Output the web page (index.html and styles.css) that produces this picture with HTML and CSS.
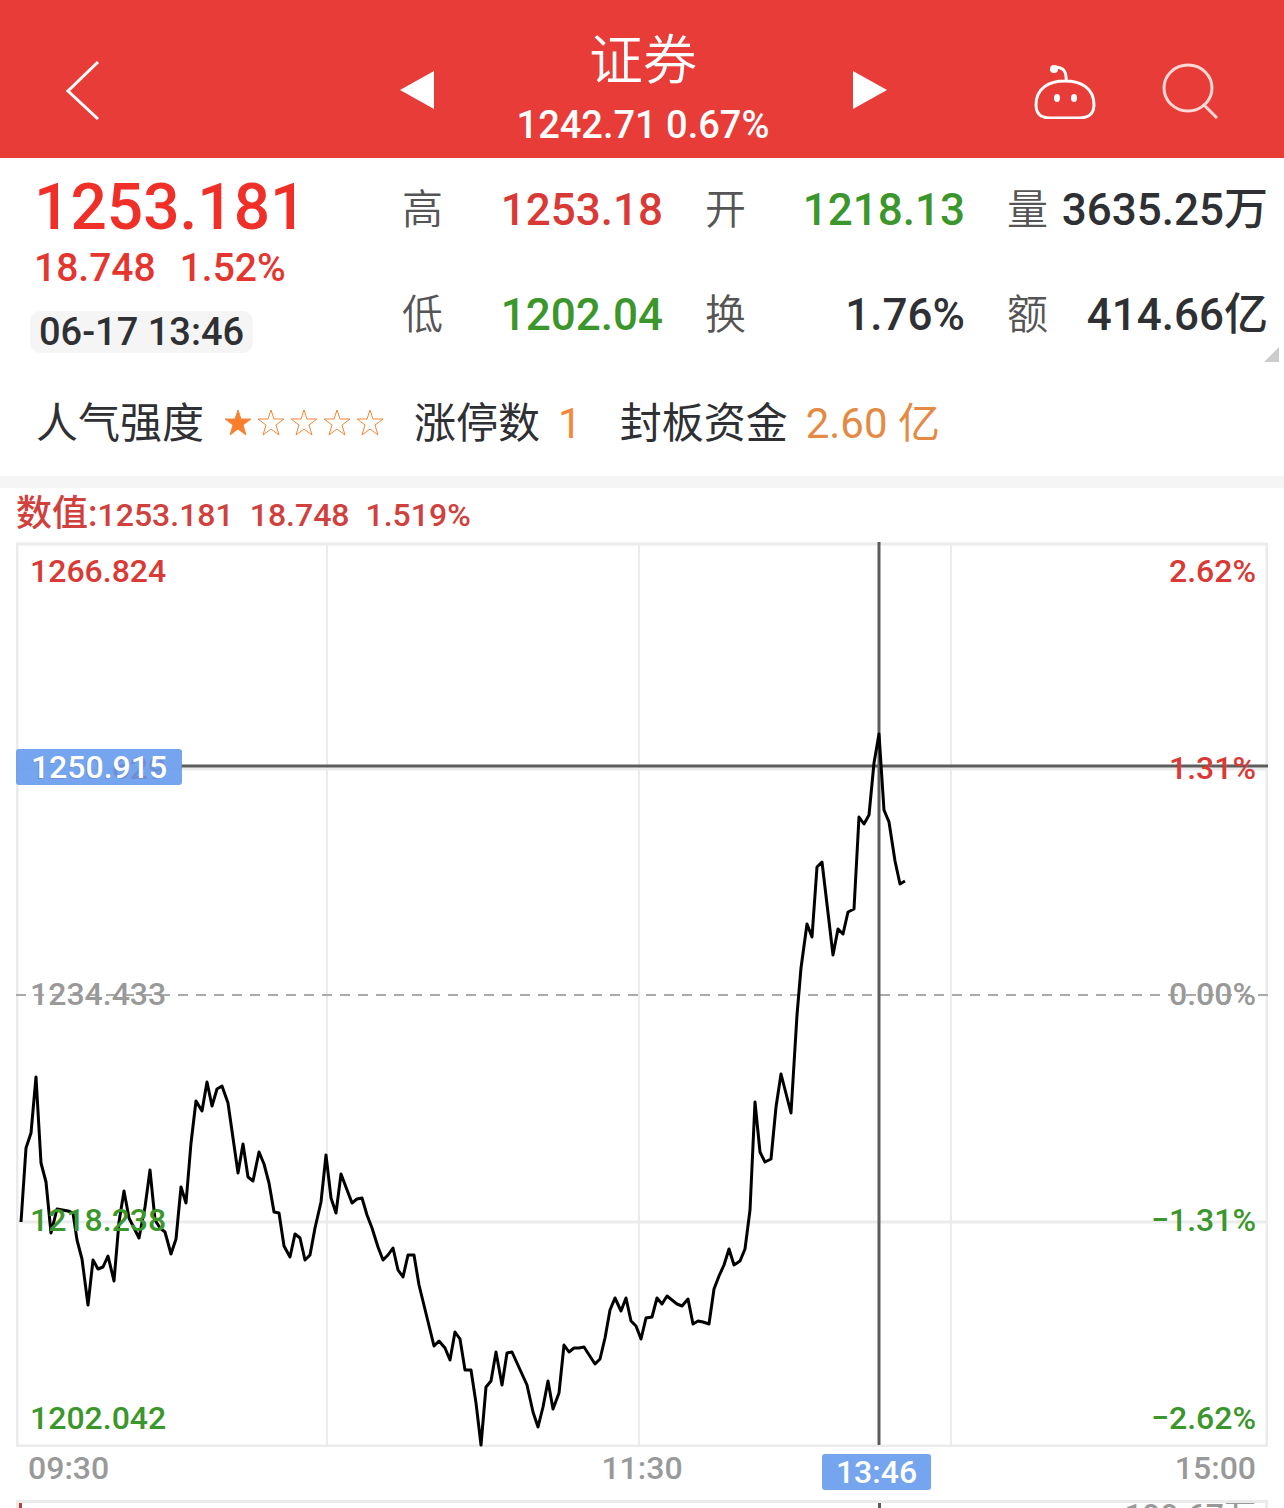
FILE: index.html
```
<!DOCTYPE html>
<html lang="zh-CN">
<head>
    <meta charset="UTF-8">
    <meta name="viewport" content="width=device-width, initial-scale=1.0">
    <title>证券 1242.71 0.67%</title>
    <link rel="stylesheet" href="styles.css">
</head>
<body>
    <!-- Header -->
    <header class="topbar">
        <button class="icon-btn back" aria-label="返回">
            <svg width="36" height="62" viewBox="0 0 36 62"><path d="M34 3 4 32l30 28" /></svg>
        </button>
        <div class="switcher">
            <button class="icon-btn" aria-label="上一个">
                <svg width="36" height="40" viewBox="0 0 36 40"><path class="solid" d="M36 1v38L2 20z" /></svg>
            </button>
            <div class="title">
                <h1>证券</h1>
                <p>1242.71 0.67%</p>
            </div>
            <button class="icon-btn" aria-label="下一个">
                <svg width="36" height="40" viewBox="0 0 36 40"><path class="solid" d="M1 1v38l34-19z" /></svg>
            </button>
        </div>
        <div class="actions">
            <button class="icon-btn" aria-label="智能助手">
                <svg width="64" height="58" viewBox="0 0 64 58">
                    <path d="M33 20c-16 0-29 7-29 24 0 9 5 13 14 13h29c9 0 15-4 15-13 0-17-13-24-29-24zM34 20c1-9-2-14-12-14" />
                    <circle class="solid" cx="22" cy="8" r="4" />
                    <ellipse class="solid" cx="25" cy="37" rx="3" ry="4" />
                    <ellipse class="solid" cx="42" cy="37" rx="3" ry="4" />
                </svg>
            </button>
            <button class="icon-btn search" aria-label="搜索">
                <svg width="60" height="60" viewBox="0 0 60 60"><ellipse cx="26" cy="28" rx="24" ry="23" /><path d="M41 44l14 14" /></svg>
            </button>
        </div>
    </header>

    <!-- Quote -->
    <section class="quote">
        <div class="price">
            <div class="last">1253.181</div>
            <div class="change"><span>18.748</span><span>1.52%</span></div>
            <time class="stamp">06-17 13:46</time>
        </div>
        <dl class="stats">
            <div><dt>高</dt><dd class="up">1253.18</dd></div>
            <div><dt>开</dt><dd class="down">1218.13</dd></div>
            <div><dt>量</dt><dd>3635.25万</dd></div>
            <div><dt>低</dt><dd class="down">1202.04</dd></div>
            <div><dt>换</dt><dd>1.76%</dd></div>
            <div><dt>额</dt><dd>414.66亿</dd></div>
        </dl>
        <button class="expand" aria-label="展开"></button>
    </section>
    <section class="heat">
        <span>人气强度</span>
        <svg class="stars" width="162" height="30" viewBox="0 0 162 30" role="img" aria-label="1 / 5">
            <defs><path id="star" d="M14 2l3 9h10l-8 6 3 10-8-6-8 6 3-10-8-6h10z" /></defs>
            <use href="#star" class="on" />
            <use href="#star" x="33" />
            <use href="#star" x="66" />
            <use href="#star" x="99" />
            <use href="#star" x="132" />
        </svg>
        <span>涨停数</span>
        <span class="hot limit">1</span>
        <span>封板资金</span>
        <span class="hot">2.60 亿</span>
    </section>

    <!-- Chart -->
    <main class="chart-area">
        <div class="readout"><span><b>数值:</b>1253.181</span><span>18.748</span><span>1.519%</span></div>
        <div class="chart">
            <svg class="plot" viewBox="16 542 1252 905" preserveAspectRatio="none">
                <path class="grid thin" d="M327 545V1445M639 545V1445M951 545V1445" />
                <path class="grid" d="M17 544H1267V1446H17zM17 769H1267M17 1222H1267" />
                <path class="zero" d="M16 995H1268" />
                <path class="cross" d="M181 766H1268M879 542V1445" />
                <polyline class="line" points="21,1222 26,1148 31,1133 36,1077 41,1163 46,1182 51,1233 57,1209 68,1211 73,1213 77,1240 82,1259 88,1305 93,1260 98,1269 103,1267 108,1256 114,1281 119,1222 124,1191 129,1218 134,1228 139,1238 145,1207 150,1170 155,1220 160,1228 165,1232 171,1254 176,1239 181,1187 186,1203 191,1143 196,1101 202,1111 207,1082 212,1106 217,1089 222,1086 228,1103 233,1138 238,1173 243,1144 248,1177 253,1181 259,1152 264,1164 269,1183 274,1212 279,1213 284,1246 290,1257 295,1234 300,1238 305,1260 310,1255 315,1228 321,1202 326,1155 331,1198 336,1213 341,1174 352,1203 357,1199 362,1198 367,1215 372,1228 378,1247 383,1260 388,1255 393,1248 398,1270 403,1277 408,1255 414,1255 419,1285 434,1346 439,1341 445,1348 450,1360 455,1332 460,1339 465,1370 471,1370 476,1403 481,1445 486,1387 491,1381 496,1352 502,1385 507,1353 512,1352 517,1363 527,1385 533,1412 538,1427 543,1407 548,1381 553,1409 559,1393 564,1345 569,1352 574,1348 579,1348 584,1347 595,1364 600,1359 605,1338 610,1310 615,1298 621,1311 626,1298 631,1321 636,1326 641,1339 646,1318 652,1317 657,1298 662,1304 667,1296 677,1304 682,1306 688,1299 693,1324 698,1321 703,1322 709,1324 714,1289 719,1276 724,1265 729,1249 734,1265 740,1261 745,1249 750,1210 755,1102 760,1152 765,1162 771,1159 776,1107 781,1074 791,1113 797,1015 801,968 807,924 812,937 817,867 822,862 833,955 838,929 843,934 848,912 854,909 859,817 864,824 869,815 874,763 879,734 884,810 889,822 895,861 900,884 905,881" />
            </svg>
            <div class="scale left">
                <span class="up">1266.824</span>
                <span class="up">1250.629</span>
                <span class="flat">1234.433</span>
                <span class="down">1218.238</span>
                <span class="down">1202.042</span>
            </div>
            <div class="scale right">
                <span class="up">2.62%</span>
                <span class="up">1.31%</span>
                <span class="flat">0.00%</span>
                <span class="down">−1.31%</span>
                <span class="down">−2.62%</span>
            </div>
            <span class="tag tag-price">1250.915</span>
        </div>
        <div class="times">
            <span>09:30</span>
            <span>11:30</span>
            <span>15:00</span>
            <span class="tag tag-time">13:46</span>
        </div>
        <div class="volume">
            <i class="bar"></i>
            <i class="cursor"></i>
            <span>199.67万</span>
        </div>
    </main>
</body>
</html>
```
FILE: styles.css
```
* { box-sizing: border-box; }
body { margin: 0; height: 100vh; display: flex; flex-direction: column; overflow: hidden; background: #fff; color: #2f3033; font-family: Roboto, "Noto Sans CJK SC", sans-serif; font-weight: 500; }
h1, p, dl, dd { margin: 0; }
svg { display: block; }
.up { color: #d93a35; }
.down { color: #3b962b; }
.flat { color: #999; }

/* header */
.topbar { display: grid; grid-template-columns: 1fr 490px 1fr; align-items: center; flex: none; height: 158px; padding: 0 62px 0 64px; background: #e83c38; color: #fff; }
.icon-btn { padding: 0; border: 0; background: none; cursor: pointer; }
.icon-btn svg { fill: none; stroke: #fff; stroke-width: 3; margin-top: 22px; }
.icon-btn .solid { fill: #fff; stroke: none; }
.back { justify-self: start; }
.switcher { display: flex; align-items: center; justify-content: space-between; }
.title { text-align: center; }
.title h1 { font-size: 54px; line-height: 70px; font-weight: 350; margin-top: 22px; }
.title p { font-size: 38px; line-height: 56px; }
.actions { display: flex; justify-content: space-between; align-items: center; justify-self: end; width: 190px; }
.search svg { stroke: #ffd9d6; }

/* quote */
.quote { position: relative; display: flex; flex: none; height: 212px; padding: 12px 16px 0 34px; }
.price { width: 368px; flex: none; }
.last { font-size: 64px; line-height: 76px; color: #f03028; }
.change { display: flex; gap: 24px; font-size: 39px; line-height: 44px; color: #e5352f; }
.stamp { display: inline-block; margin-top: 21px; margin-left: -4px; padding: 0 9px; border-radius: 10px; background: #f5f5f5; font-size: 38px; line-height: 42px; }
.stats { flex: 1; display: grid; grid-template-columns: 261px 260px 1fr; column-gap: 42px; grid-auto-rows: 105px; }
.stats div { display: flex; justify-content: space-between; line-height: 80px; white-space: nowrap; }
.stats dt { font-size: 41px; font-weight: 350; color: #555; }
.stats dd { font-size: 44px; }
.expand { position: absolute; right: 5px; bottom: 8px; width: 15px; height: 15px; padding: 0; border: 0; background: #ccc; clip-path: polygon(100% 0, 100% 100%, 0 100%); }

.heat { display: flex; align-items: baseline; flex: none; height: 118px; padding: 0 36px; border-bottom: 12px solid #f5f5f5; font-size: 42px; line-height: 108px; font-weight: 400; white-space: nowrap; }
.stars { align-self: center; margin: 0 28px 0 20px; fill: none; stroke: #f0883a; stroke-width: 1; }
.stars .on { fill: #f97f2c; }
.hot { margin-left: 18px; color: #e58a45; }
.limit { margin-right: 38px; color: #f5883a; }

/* chart */
.chart-area { flex: 1; display: flex; flex-direction: column; margin: 0 16px; min-height: 0; font-size: 32px; }
.readout { display: flex; align-items: baseline; flex: none; gap: 16px; height: 54px; line-height: 52px; color: #d0403c; white-space: nowrap; }
.readout b { font-size: 36px; font-weight: 500; }
.chart { position: relative; flex: none; height: 905px; }
.plot { width: 100%; height: 100%; fill: none; }
.plot path, .plot polyline { vector-effect: non-scaling-stroke; }
.grid { stroke: #ebebeb; stroke-width: 3; }
.grid.thin { stroke-width: 2; }
.zero { stroke: #aaa; stroke-width: 2; stroke-dasharray: 10 8; }
.line { stroke: #000; stroke-width: 3; stroke-linejoin: round; }
.cross { stroke: #5c5c5c; stroke-width: 3; }
/* rows are centred on the grid lines, the outer two sit inside the frame */
.scale { position: absolute; top: 0; bottom: 0; display: grid; grid-template-rows: 58fr 336fr 116fr 336fr 59fr; align-items: center; line-height: 40px; }
.scale.left { left: 14px; }
.scale.right { right: 12px; text-align: right; }
.tag { position: absolute; border-radius: 3px; background: rgba(98, 152, 236, .88); color: #fff; line-height: 36px; text-align: center; }
.tag-price { left: 0; top: 207px; width: 166px; }
.times { position: relative; display: flex; flex: none; justify-content: space-between; height: 53px; padding: 0 12px; line-height: 43px; color: #999; }
.tag-time { left: 806px; top: 7px; width: 109px; }
.volume { position: relative; flex: 1; min-height: 0; overflow: hidden; border: 3px solid #ebebeb; border-bottom: 0; text-align: right; padding-right: 9px; line-height: 24px; color: #999; }
.bar { position: absolute; left: 0; top: 0; width: 3px; height: 100%; background: #b8403c; }
.cursor { position: absolute; left: 859px; top: 0; width: 3px; height: 100%; background: #5c5c5c; }
```
